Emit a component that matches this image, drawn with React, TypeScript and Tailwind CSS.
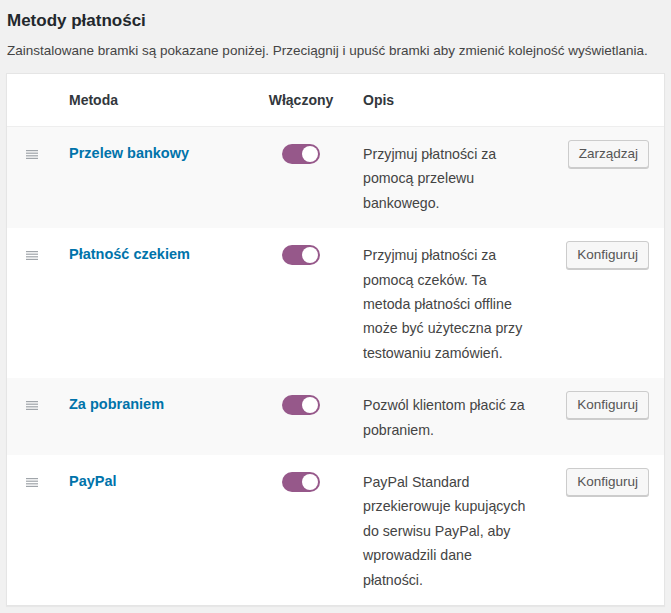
import React from "react";

type Row = {
  name: string;
  lines: string[];
  button: string;
  bg: string;
};

const rows: Row[] = [
  {
    name: "Przelew bankowy",
    lines: ["Przyjmuj płatności za", "pomocą przelewu", "bankowego."],
    button: "Zarządzaj",
    bg: "bg-[#f9f9f9]",
  },
  {
    name: "Płatność czekiem",
    lines: [
      "Przyjmuj płatności za",
      "pomocą czeków. Ta",
      "metoda płatności offline",
      "może być użyteczna przy",
      "testowaniu zamówień.",
    ],
    button: "Konfiguruj",
    bg: "bg-white",
  },
  {
    name: "Za pobraniem",
    lines: ["Pozwól klientom płacić za", "pobraniem."],
    button: "Konfiguruj",
    bg: "bg-[#f9f9f9]",
  },
  {
    name: "PayPal",
    lines: [
      "PayPal Standard",
      "przekierowuje kupujących",
      "do serwisu PayPal, aby",
      "wprowadzili dane",
      "płatności.",
    ],
    button: "Konfiguruj",
    bg: "bg-white",
  },
];

function DragIcon() {
  return (
    <svg width="12" height="9" viewBox="0 0 12 9" className="block">
      <rect x="0" y="0" width="12" height="1.2" fill="#a0a5aa" />
      <rect x="0" y="2.6" width="12" height="1.2" fill="#a0a5aa" />
      <rect x="0" y="5.2" width="12" height="1.2" fill="#a0a5aa" />
      <rect x="0" y="7.8" width="12" height="1.2" fill="#a0a5aa" />
    </svg>
  );
}

function Toggle() {
  return (
    <div className="w-[38px] h-[20px] rounded-full bg-[#96588a] flex items-center justify-end pr-[2px]">
      <div className="w-[16px] h-[16px] rounded-full bg-white" />
    </div>
  );
}

export default function App() {
  return (
    <div
      className="min-h-[613px] bg-[#f1f1f1] px-[6px] pt-[9px] text-[#444]"
      style={{ fontFamily: '"Liberation Sans", Arial, sans-serif' }}
    >
      <h2 className="text-[17px] leading-[24px] font-semibold text-[#23282d] pl-[1px]">
        Metody płatności
      </h2>
      <p className="mt-[8px] text-[13.5px] leading-[20px] text-[#444] pl-[1px] whitespace-nowrap">
        Zainstalowane bramki są pokazane poniżej. Przeciągnij i upuść bramki aby
        zmienić kolejność wyświetlania.
      </p>
      <div className="mt-[12px] w-[659px] bg-white border border-[#e5e5e5] shadow-[0_1px_1px_rgba(0,0,0,0.04)]">
        <div className="flex items-center h-[53px] border-b border-[#eeeeee] text-[14px] font-semibold text-[#32373c]">
          <div className="w-[52px]" />
          <div className="w-[192px] pl-[10px]">Metoda</div>
          <div className="w-[100px] text-center">Włączony</div>
          <div className="pl-[12px]">Opis</div>
        </div>
        {rows.map((r) => (
          <div key={r.name} className={`flex items-start pt-[15px] pb-[13px] ${r.bg}`}>
            <div className="w-[52px] pl-[19px] h-[24px] flex items-center">
              <DragIcon />
            </div>
            <div className="w-[192px] pl-[10px] h-[24px] flex items-center text-[14.5px] font-bold text-[#0073aa]">
              {r.name}
            </div>
            <div className="w-[100px] h-[24px] flex items-center justify-center">
              <Toggle />
            </div>
            <div className="flex-1 pl-[12px] text-[14.2px] leading-[24.4px] text-[#444]">
              {r.lines.map((l, i) => (
                <div key={i}>{l}</div>
              ))}
            </div>
            <div className="pr-[15px] -mt-[2px]">
              <button className="h-[28px] px-[10px] rounded-[3px] border border-[#cccccc] bg-[#f7f7f7] text-[13.5px] text-[#555] shadow-[0_1px_0_#cccccc]">
                {r.button}
              </button>
            </div>
          </div>
        ))}
      </div>
    </div>
  );
}
